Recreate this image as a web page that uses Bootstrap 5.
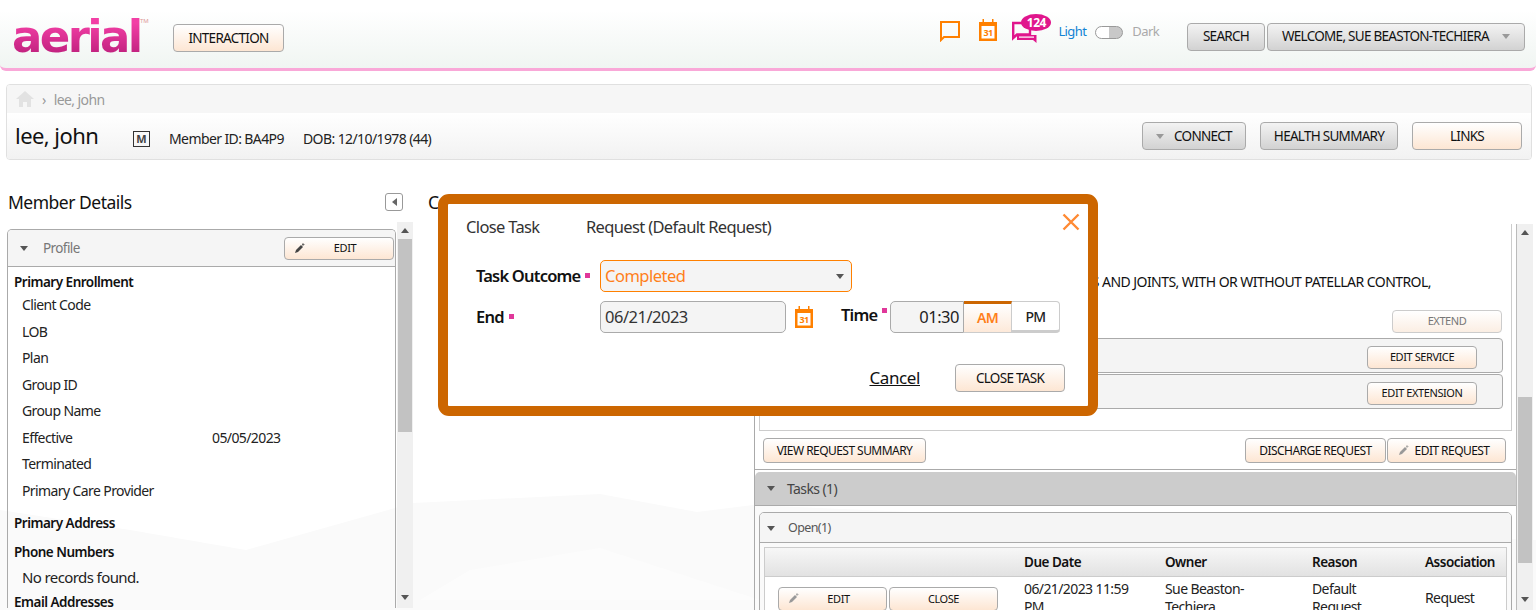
<!DOCTYPE html>
<html lang="en">
<head>
<meta charset="utf-8">
<title>Close Task</title>
<link href="https://cdn.jsdelivr.net/npm/bootstrap@5.3.0/dist/css/bootstrap.min.css" rel="stylesheet">
<style>
html,body{height:610px;overflow:hidden}
body{font-family:"Noto Sans",Lato,sans-serif;font-size:14px;letter-spacing:-.6px;color:#222;background:#fff;position:relative}
.bgshape{position:absolute;left:0;top:0;width:1536px;height:610px;z-index:-1}
.topbar{height:71px;background:linear-gradient(#fff 0,#fff 15%,#f0f5f2 100%);border-bottom:3px solid #f9a8d8;border-radius:0 0 6px 6px;padding:6px 11px 0 12px}
.logo-word{font-family:"DejaVu Sans",sans-serif;font-weight:700;font-size:45px;line-height:56px;letter-spacing:-2.6px;background:linear-gradient(#f23fa5 25%,#b81c78 90%);-webkit-background-clip:text;background-clip:text;color:transparent;width:128px;white-space:nowrap}
.logo-tm{font-size:6px;color:#d99;letter-spacing:0;margin-top:-32px;width:16px}
.tbtn{font-family:inherit;font-size:13.5px;letter-spacing:-.72px;color:#111;border:1px solid #aaa;border-radius:4px;height:28px;padding:0 14px;white-space:nowrap;background:linear-gradient(#f3f3f3,#d2d2d2);display:inline-flex;align-items:center;justify-content:center}
.tbtn.warm{background:linear-gradient(#fff,#fde6d3)}
.tbtn.small-t{font-size:12px;letter-spacing:-.55px;height:25px;padding:0}
.tbtn.tiny-t{font-size:11px;letter-spacing:-.42px;height:23px;padding:0}
.tbtn.off{color:#777;border-color:#ccc;background:linear-gradient(#fff,#fbeee3)}
.w110{width:110px}
.caret-d{width:0;height:0;border-left:4px solid transparent;border-right:4px solid transparent;border-top:5px solid #555;display:inline-block}
.caret-g{border-top-color:#999}
.inter-btn{margin-left:17px;margin-top:2px;width:111px}
.toggle-track{width:28px;height:13px;border:1px solid #999;border-radius:7px;background:linear-gradient(90deg,#fff 50%,#c8c8c8 50%);display:inline-block}
.head-icons{margin-right:28px;height:44px}
.ic-bubble{margin-top:5px;margin-right:18px}
.ic-cal{margin-top:4px;margin-right:15px}
.msg-wrap{position:relative;width:46px;height:24px;margin-top:5px}
.badge-num{position:absolute;left:9px;top:-6px;width:30px;height:17px;background:#e0168c;color:#fff;border-radius:50%;font-size:12px;font-weight:700;line-height:17px;text-align:center;letter-spacing:-.5px}
.theme-sw{height:30px;margin-top:2px;gap:9px;font-size:13px}
.lt-on{color:#1283d4}.lt-off{color:#aaa}
.wbtn{width:258px;justify-content:space-between}
.sbtn{width:78px}
.top-btns{gap:2px;margin-top:-1px}
.memberbox{margin:13px 4px 0 6px;height:76px;border:1px solid #e0e0e0;border-radius:4px;overflow:hidden}
.crumbs{height:28px;background:#f6f6f6;padding-left:9px;color:#999;font-size:14px}
.member-row{height:46px;background:linear-gradient(#fff,#f2f2f2);padding:0 9px 0 8px;color:#222}
.member-name{font-size:22px;color:#111;width:118px;letter-spacing:-.55px;margin-top:-2px}
.sexbox{width:17px;height:16px;border:1px solid #333;font-size:11px;font-weight:700;line-height:14px;text-align:center;color:#444;margin-right:19px;letter-spacing:0;margin-top:5px}
.mid{width:134px;margin-top:5px}.dob{margin-top:5px}
.member-btns{gap:14px}
.cbtn{width:104px;gap:10px}.hbtn{width:138px}
.panes{margin-top:20px;padding-left:8px}
.leftcol{width:405px;flex:none}
.head-title{font-size:17.5px;color:#111;line-height:24px;letter-spacing:-.5px}
.collapse-btn{width:18px;height:18px;border:1px solid #999;border-radius:3px;margin-top:-1px}
.caret-l{width:0;height:0;border-top:4px solid transparent;border-bottom:4px solid transparent;border-right:5px solid #666}
.lefthead{height:24px;width:395px;margin-top:10px}
.leftwrap{margin-top:8px;height:386px;margin-left:-1px}
.leftpanel{width:390px;border:1px solid #aaa;border-bottom:0;border-radius:5px 5px 0 0;margin-top:7px;height:379px;overflow:hidden}
.phead{height:37px;background:#f5f5f5;border-bottom:1px solid #aaa;padding:0 1px 0 12px;color:#777}
.caret-gap{margin-right:15px}
.prof{font-size:13.5px}
.sbar{width:16px;height:386px;background:#f0f0f0;position:relative;flex:none;display:flex;flex-direction:column;align-items:center;justify-content:space-between;padding:6px 0 8px}
.sb-left{margin-left:1px}
.sthumb{position:absolute;left:1px;right:1px;background:#c2c2c2}
.th-l{top:17px;height:193px}.th-r{top:173px;height:166px}
.carup{width:0;height:0;border-left:4px solid transparent;border-right:4px solid transparent;border-bottom:5px solid #555}
.carun{width:0;height:0;border-left:4px solid transparent;border-right:4px solid transparent;border-top:5px solid #555}
.sect{font-weight:600;color:#111;padding-left:6px;line-height:20px;font-size:13.5px;letter-spacing:-.5px}
.sect-a{margin-top:5px}.sect-b{margin-top:9px}.sect-c{margin-top:3px}
.fld{display:flex;padding-left:14px;height:26.5px;line-height:26px;color:#222}
.fld span:first-child{width:190px}
.fld.nor{height:27px;font-size:15px;line-height:30px}
.edit-pen{left:9px;top:5px}
.tbtn.edit-lbl{padding-left:12px}
.rightcol{flex:1;padding-left:15px}
.rightwrap{margin-top:10px;height:386px;margin-left:326px;margin-right:3px}
.rightpanel{width:763px;border-left:1px solid #aaa;border-right:1px solid #bbb;overflow:hidden;position:relative;height:386px}
.infobox{margin:0 4px 0 4px;border:1px solid #ccc;border-top:0;height:207px;padding:86px 8px 0;position:relative}
.svc-text{position:absolute;right:80px;top:49px;color:#111;white-space:nowrap;font-size:14px;letter-spacing:-.55px;line-height:18px}
.svc-dot{position:absolute;left:331px;top:62px;color:#111;line-height:14px}
.svc-row{height:35px;background:#f4f4f4;border:1px solid #aaa;border-radius:4px;margin-bottom:1px;padding:4px 25px 0 0}
.extbar{height:23px;margin-bottom:5px;padding-right:1px}
.btnline{height:39px;padding:7px 10px 0 8px;border-bottom:1px solid #aaa}
.vbtn{width:163px}.dbtn{width:141px}.ebtn{width:119px;gap:6px;margin-left:1px}
.tbtn.ebtn{padding-right:6px}
.tasks-head{height:34px;background:#ccc;border-bottom:1px solid #aaa;border-radius:5px 5px 0 0;margin-top:2px;padding-left:12px;color:#444;font-size:14px}
.tc-gap{margin-right:12px}
.opanel{margin:6px 4px 0 4px;border:1px solid #aaa;border-radius:5px 5px 0 0;height:110px;overflow:hidden}
.ohead{height:30px;background:#f5f5f5;border-bottom:1px solid #aaa;padding:2px 0 0 7px;font-size:12.5px;color:#555}
.oc-gap{margin-right:13px}
.tasktbl{margin:4px 4px 0;border:1px solid #ccc;font-size:14px}
.thd{height:29px;background:linear-gradient(#f7f7f7,#e2e2e2);border-bottom:1px solid #ccc;font-weight:600;color:#111;font-size:13.5px;letter-spacing:-.5px}
.trw{height:42px;background:#fff;line-height:18px;color:#222}
.c1{width:259px;flex:none}.c2{width:141px;flex:none;padding-right:20px}.c3{width:147px;flex:none;padding-right:55px}.c4{width:113px;flex:none;padding-right:45px}
.t-btns{padding-left:13px;padding-top:1px;gap:2px}
.t-btns .tbtn{height:24px;width:109px}
.overlay{position:absolute;left:438px;top:194px;width:660px;height:222px;background:#fff;border:10px solid #cc6600;border-radius:11px;padding:0 18px;z-index:10}
.mtitle{font-size:16.5px;color:#333;height:54px;padding-top:11px;letter-spacing:-.65px}
.mtitle span:first-child{width:120px;display:inline-block}
.mx{position:absolute;right:8px;top:9px}
.mlabel{font-weight:600;font-size:16.5px;color:#111;letter-spacing:-.8px;white-space:nowrap}
.req{display:inline-block;width:5px;height:5px;background:#e0389a;margin-left:5px;vertical-align:4px}
.fctl{height:32px;border:1px solid #aaa;background:#f4f4f4;border-radius:5px;font-size:16.5px;padding:0 4px;line-height:30px;letter-spacing:-.5px;color:#333}
.fctl.sel{width:252px;border-color:#ff8000;color:#ff7f1a;display:flex;align-items:center;justify-content:space-between;padding-right:7px}
.fdate{width:186px}
.ftime{width:74px;color:#222;border-radius:5px 0 0 5px}
.lbl-col{width:124px;margin-left:10px}
.row-a{padding-top:2px}.row-b{margin-top:9px}
.mcal{margin-left:9px}
.time-lbl{margin-left:28px;width:49px;margin-top:-4px}
.time-lbl .req{vertical-align:8px}
.ampm{width:48px;height:32px;border:1px solid #ccc;font-size:14px;display:flex;align-items:center;justify-content:center;font-weight:600}
.am{color:#ff7f1a;background:linear-gradient(#fff,#fde9d9);border-top:3px solid #cc6600;border-left:0;padding-bottom:2px}
.pm{border-bottom-width:3px;border-left:0;background:#fff;color:#222;border-radius:0 4px 4px 0;font-weight:500}
.mfoot{margin-top:31px;margin-right:5px}
.cancel{font-size:17px;color:#111;text-decoration:underline;letter-spacing:-.4px}
.closebtn{width:110px;margin-left:35px}
</style>
</head>
<body>
<svg class="bgshape" viewBox="0 0 1536 610" aria-hidden="true"><path d="M0 510L130 530 246 550 413 503 600 494 697 512 753 505 1536 540V610H0Z" fill="#fafafa"/><path d="M420 600L470 570 600 548 760 600Z" fill="#fcfcfc"/></svg>

<header class="topbar d-flex align-items-center">
  <div class="logo-word">aerial</div>
  <div class="logo-tm">TM</div>
  <button class="tbtn warm inter-btn" type="button">INTERACTION</button>
  <div class="ms-auto d-flex align-items-start head-icons">
    <svg class="ic-bubble" width="22" height="22" viewBox="0 0 22 22"><path d="M2 2H20V17H5L2 20Z" fill="none" stroke="#ff8000" stroke-width="2"/></svg>
    <svg class="ic-cal" width="18" height="22" viewBox="0 0 18 22"><path d="M0 3H3.500V0H5V3H13V0H14.500V3H18V22H0Z" fill="#ff8000"/><rect x="2.500" y="7" width="13" height="12.500" fill="#fff"/><text x="9" y="17" font-size="9" font-weight="700" text-anchor="middle" fill="#ff8000" font-family="Noto Sans">31</text></svg>
    <div class="msg-wrap">
      <svg width="26" height="22" viewBox="0 0 26 22"><path d="M1.200 2H18V13.500H5L1.200 17Z" fill="none" stroke="#e0168c" stroke-width="2.400"/><path d="M5 14H24.500V22L21 19H5Z" fill="#e0168c"/><rect x="7" y="15.500" width="15" height="1.200" fill="#fff"/></svg>
      <span class="badge-num">124</span>
    </div>
    <div class="d-flex align-items-center theme-sw">
      <span class="lt-on">Light</span>
      <span class="toggle-track"></span>
      <span class="lt-off">Dark</span>
    </div>
  </div>
  <div class="d-flex top-btns">
    <button class="tbtn sbtn" type="button">SEARCH</button>
    <button class="tbtn wbtn" type="button">WELCOME, SUE BEASTON-TECHIERA <i class="caret-d caret-g"></i></button>
  </div>
</header>

<section class="memberbox">
  <div class="crumbs d-flex align-items-center">
    <svg width="18" height="18" viewBox="0 0 18 18"><path d="M9 1L0 9H3V17H7V12H11V17H15V9H18Z" fill="#e2e2e2"/></svg>
    <span class="ms-2 me-2">›</span><span>lee, john</span>
  </div>
  <div class="member-row d-flex align-items-center">
    <span class="member-name">lee, john</span>
    <span class="sexbox">M</span>
    <span class="mid">Member ID: BA4P9</span>
    <span class="dob">DOB: 12/10/1978 (44)</span>
    <div class="ms-auto d-flex member-btns">
      <button class="tbtn cbtn" type="button"><i class="caret-d caret-g"></i>CONNECT</button>
      <button class="tbtn hbtn" type="button">HEALTH SUMMARY</button>
      <button class="tbtn warm w110" type="button">LINKS</button>
    </div>
  </div>
</section>

<main class="panes d-flex">
  <div class="leftcol">
    <div class="lefthead d-flex justify-content-between align-items-center">
      <span class="head-title">Member Details</span>
      <span class="collapse-btn d-flex align-items-center justify-content-center"><i class="caret-l"></i></span>
    </div>
    <div class="leftwrap d-flex align-items-start">
      <div class="leftpanel">
        <div class="phead d-flex align-items-center">
          <i class="caret-d caret-gap"></i><span class="prof">Profile</span>
          <button class="tbtn warm tiny-t w110 ms-auto position-relative edit-lbl" type="button">
            <svg class="position-absolute edit-pen" width="11" height="11" viewBox="0 0 11 11"><path d="M1 10L2 7 7 2 9 4 4 9Z" fill="#444"/><path d="M9 0V3M8 1.500H10.500" stroke="#444" stroke-width=".7"/></svg>EDIT</button>
        </div>
        <div class="sect sect-a">Primary Enrollment</div>
        <div class="fld"><span>Client Code</span><span></span></div>
        <div class="fld"><span>LOB</span><span></span></div>
        <div class="fld"><span>Plan</span><span></span></div>
        <div class="fld"><span>Group ID</span><span></span></div>
        <div class="fld"><span>Group Name</span><span></span></div>
        <div class="fld"><span>Effective</span><span>05/05/2023</span></div>
        <div class="fld"><span>Terminated</span><span></span></div>
        <div class="fld"><span>Primary Care Provider</span><span></span></div>
        <div class="sect sect-b">Primary Address</div>
        <div class="sect sect-b">Phone Numbers</div>
        <div class="fld nor">No records found.</div>
        <div class="sect sect-c">Email Addresses</div>
      </div>
      <div class="sbar sb-left"><i class="carup"></i><span class="sthumb th-l"></span><i class="carun"></i></div>
    </div>
  </div>
  <div class="rightcol">
    <div class="lefthead"><span class="head-title">C</span></div>
    <div class="rightwrap d-flex">
      <div class="rightpanel">
        <div class="infobox">
          <div class="svc-text">S AND JOINTS, WITH OR WITHOUT PATELLAR CONTROL,</div>
          <div class="svc-dot">.</div>
          <div class="extbar d-flex justify-content-end"><button class="tbtn off tiny-t w110" type="button">EXTEND</button></div>
          <div class="svc-row d-flex align-items-center justify-content-end"><button class="tbtn warm tiny-t w110" type="button">EDIT SERVICE</button></div>
          <div class="svc-row d-flex align-items-center justify-content-end"><button class="tbtn warm tiny-t w110" type="button">EDIT EXTENSION</button></div>
        </div>
        <div class="btnline d-flex">
          <button class="tbtn warm small-t vbtn" type="button">VIEW REQUEST SUMMARY</button>
          <button class="tbtn warm small-t dbtn ms-auto" type="button">DISCHARGE REQUEST</button>
          <button class="tbtn warm small-t ebtn" type="button"><svg width="11" height="11" viewBox="0 0 11 11"><path d="M1 10L2 7 7 2 9 4 4 9Z" fill="#999"/><path d="M9 0V3M8 1.500H10.500" stroke="#999" stroke-width=".7"/></svg>EDIT REQUEST</button>
        </div>
        <div class="tasks-head d-flex align-items-center"><i class="caret-d tc-gap"></i>Tasks (1)</div>
        <div class="opanel">
          <div class="ohead d-flex align-items-center"><i class="caret-d oc-gap"></i>Open(1)</div>
          <div class="tasktbl">
            <div class="thd d-flex align-items-center"><span class="c1"></span><span class="c2">Due Date</span><span class="c3">Owner</span><span class="c4">Reason</span><span>Association</span></div>
            <div class="trw d-flex align-items-center">
              <div class="c1 d-flex t-btns">
                <button class="tbtn warm tiny-t position-relative edit-lbl" type="button"><svg class="position-absolute edit-pen" width="11" height="11" viewBox="0 0 11 11"><path d="M1 10L2 7 7 2 9 4 4 9Z" fill="#999"/><path d="M9 0V3M8 1.500H10.500" stroke="#999" stroke-width=".7"/></svg>EDIT</button>
                <button class="tbtn warm tiny-t" type="button">CLOSE</button>
              </div>
              <div class="c2">06/21/2023 11:59 PM</div>
              <div class="c3">Sue Beaston-Techiera</div>
              <div class="c4">Default Request</div>
              <div>Request</div>
            </div>
          </div>
        </div>
      </div>
      <div class="sbar"><i class="carup"></i><span class="sthumb th-r"></span><i class="carun"></i></div>
    </div>
  </div>
</main>

<div class="overlay" role="dialog" aria-label="Close Task">
  <div class="mtitle"><span>Close Task</span><span>Request (Default Request)</span></div>
  <svg class="mx" width="18" height="18" viewBox="0 0 18 18"><path d="M1.500 1.500L16.500 16.500M16.500 1.500L1.500 16.500" stroke="#ff8a33" stroke-width="2.400"/></svg>
  <div class="d-flex align-items-center row-a">
    <div class="lbl-col mlabel">Task Outcome<i class="req"></i></div>
    <div class="fctl sel">Completed <i class="caret-d"></i></div>
  </div>
  <div class="d-flex align-items-center row-b">
    <div class="lbl-col mlabel">End<i class="req"></i></div>
    <div class="fctl fdate">06/21/2023</div>
    <svg class="mcal" width="18" height="22" viewBox="0 0 18 22"><path d="M0 3H3.500V0H5V3H13V0H14.500V3H18V22H0Z" fill="#ff8000"/><rect x="2.500" y="7" width="13" height="12.500" fill="#fff"/><text x="9" y="17" font-size="9" font-weight="700" text-anchor="middle" fill="#ff8000" font-family="Noto Sans">31</text></svg>
    <div class="mlabel time-lbl">Time<i class="req"></i></div>
    <div class="fctl ftime text-end">01:30</div>
    <div class="ampm am">AM</div>
    <div class="ampm pm">PM</div>
  </div>
  <div class="d-flex justify-content-end align-items-center mfoot">
    <a class="cancel" href="#">Cancel</a>
    <button class="tbtn warm closebtn" type="button">CLOSE TASK</button>
  </div>
</div>
<script src="https://cdn.jsdelivr.net/npm/bootstrap@5.3.0/dist/js/bootstrap.bundle.min.js"></script>
</body>
</html>
